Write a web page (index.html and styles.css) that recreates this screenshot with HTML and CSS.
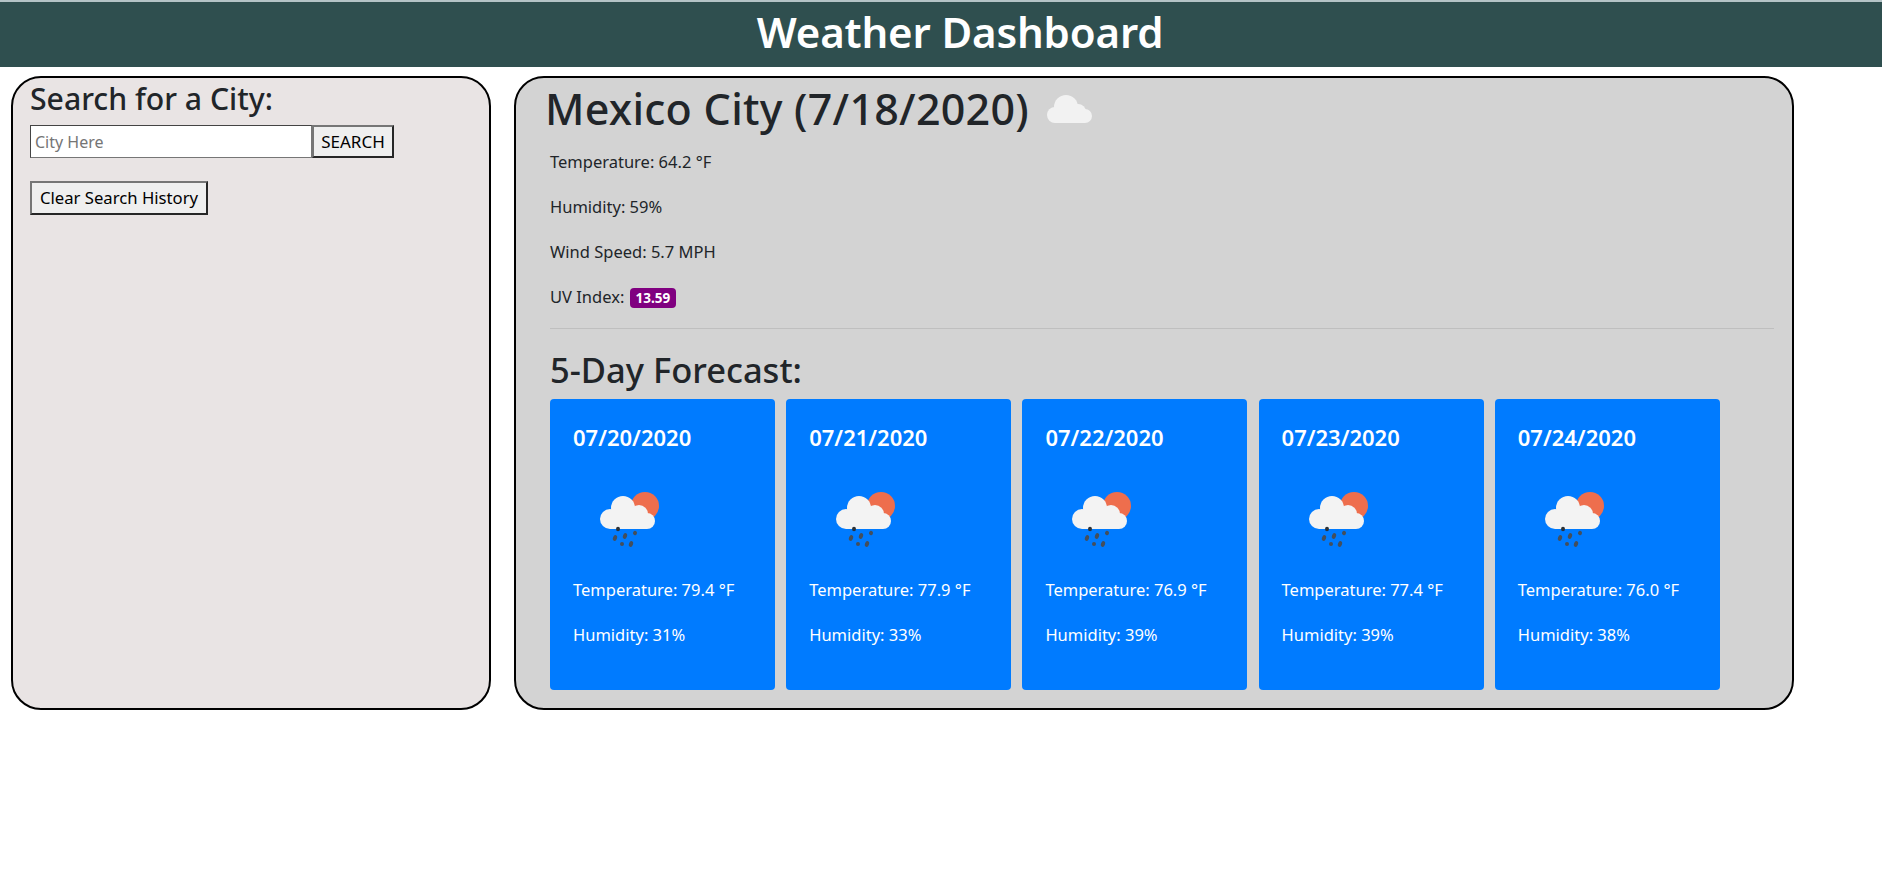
FILE: index.html
```html
<!DOCTYPE html>
<html lang="en">
<head>
  <meta charset="UTF-8">
  <title>Weather Dashboard</title>
  <link rel="stylesheet" href="styles.css">
</head>
<body>

  <svg class="icon-defs" width="0" height="0">
    <symbol id="rain-icon" viewBox="0 0 100 100">
      <circle cx="66" cy="37" r="14" fill="#ee6e4d"/>
      <g fill="#f3f3f3">
        <circle cx="31" cy="50" r="10"/>
        <circle cx="44" cy="39" r="12"/>
        <circle cx="60" cy="45" r="9"/>
        <circle cx="68" cy="52" r="8"/>
        <rect x="31" y="44" width="37" height="16"/>
      </g>
      <g fill="#444f5c">
        <ellipse cx="39" cy="60" rx="2" ry="2.200" fill="#2c3238"/>
        <ellipse cx="36" cy="69" rx="2" ry="3" transform="rotate(20 36 69)"/>
        <ellipse cx="46" cy="67" rx="2" ry="3" transform="rotate(20 46 67)"/>
        <ellipse cx="56" cy="64" rx="2" ry="2.200" transform="rotate(20 56 64)"/>
        <ellipse cx="43" cy="75" rx="2" ry="2"/>
        <ellipse cx="52" cy="75" rx="2" ry="3" transform="rotate(20 52 75)"/>
      </g>
    </symbol>
  </svg>

  <header class="top-bar">
    <h1>Weather Dashboard</h1>
  </header>

  <main class="dashboard">
    <section class="search-panel">
      <h3>Search for a City:</h3>
      <div class="search-row">
        <input type="text" class="city-input" placeholder="City Here">
        <button class="btn search-btn">SEARCH</button>
      </div>
      <button class="btn clear-btn">Clear Search History</button>
    </section>

    <section class="weather-panel">
      <div class="city-title">
        <h1>Mexico City (7/18/2020)</h1>
        <svg class="cloud-icon" viewBox="0 0 46 28">
          <g fill="#f2f2f2">
            <circle cx="8" cy="20" r="8"/>
            <circle cx="19" cy="12" r="12"/>
            <circle cx="31" cy="17" r="8"/>
            <circle cx="38" cy="21" r="7"/>
            <rect x="8" y="14" width="30" height="14"/>
          </g>
        </svg>
      </div>
      <div class="current">
        <p>Temperature: 64.2 °F</p>
        <p>Humidity: 59%</p>
        <p>Wind Speed: 5.7 MPH</p>
        <p>UV Index: <span class="uv-badge">13.59</span></p>
      </div>
      <hr>
      <h2>5-Day Forecast:</h2>
      <div class="forecast">
        <div class="card">
          <h5>07/20/2020</h5>
          <svg class="rain-icon"><use href="#rain-icon"/></svg>
          <p>Temperature: 79.4 °F</p>
          <p>Humidity: 31%</p>
        </div>
        <div class="card">
          <h5>07/21/2020</h5>
          <svg class="rain-icon"><use href="#rain-icon"/></svg>
          <p>Temperature: 77.9 °F</p>
          <p>Humidity: 33%</p>
        </div>
        <div class="card">
          <h5>07/22/2020</h5>
          <svg class="rain-icon"><use href="#rain-icon"/></svg>
          <p>Temperature: 76.9 °F</p>
          <p>Humidity: 39%</p>
        </div>
        <div class="card">
          <h5>07/23/2020</h5>
          <svg class="rain-icon"><use href="#rain-icon"/></svg>
          <p>Temperature: 77.4 °F</p>
          <p>Humidity: 39%</p>
        </div>
        <div class="card">
          <h5>07/24/2020</h5>
          <svg class="rain-icon"><use href="#rain-icon"/></svg>
          <p>Temperature: 76.0 °F</p>
          <p>Humidity: 38%</p>
        </div>
      </div>
    </section>
  </main>

</body>
</html>
```

FILE: styles.css
```css
* {
  box-sizing: border-box;
}

body {
  font-family: "Noto Sans", "Open Sans", sans-serif;
  font-size: 16.5px;
  line-height: 24px;
  color: #212529;
  background: #fff;
  margin: 0;
  border-top: 2px solid #b4c3c6;
}

.icon-defs {
  display: block;
  height: 0;
}

h1, h2, h3, h5, p {
  margin: 0;
  font-weight: 400;
}

.top-bar {
  background: #2f4f4f;
  height: 65px;
  padding-left: 38px;
  text-align: center;
}

.top-bar h1 {
  color: #fff;
  font-size: 42px;
  line-height: 60px;
  font-weight: 600;
  letter-spacing: -0.15px;
}

.dashboard {
  display: flex;
  gap: 23px;
  margin: 9px 0 0 11px;
}

.search-panel {
  width: 480px;
  height: 634px;
  background: #e9e4e4;
  border: 2px solid #000;
  border-radius: 30px;
  padding: 4px 0 0 17px;
}

.search-panel h3 {
  font-size: 30.2px;
  line-height: 34px;
  font-weight: 500;
  margin-bottom: 9px;
}

.search-row {
  display: flex;
  height: 33px;
}

.city-input {
  width: 282px;
  border: 1px solid #767676;
  border-top-color: #444;
  border-left-color: #444;
  padding: 0 4px;
  font: 16px "Noto Sans", sans-serif;
  background: #fff;
}

.city-input::placeholder {
  color: #757575;
}

.btn {
  font: 17px "Noto Sans", sans-serif;
  color: #000;
  background: #efefef;
  border: 2px solid #262626;
  border-top-color: #767676;
  border-left-color: #767676;
  padding: 0;
}

.search-btn {
  width: 82px;
}

.clear-btn {
  display: block;
  margin-top: 23px;
  width: 178px;
  height: 34px;
  padding-bottom: 2px;
  font-size: 16.7px;
}

.weather-panel {
  width: 1280px;
  height: 634px;
  background: #d3d3d3;
  border: 2px solid #000;
  border-radius: 30px;
  padding: 7px 18px 0 34px;
}

.city-title {
  display: flex;
  align-items: center;
  height: 48px;
  margin: 0 0 17px -5px;
}

.city-title h1 {
  font-size: 43px;
  line-height: 48px;
  font-weight: 500;
  letter-spacing: 0.25px;
}

.cloud-icon {
  width: 46px;
  height: 28px;
  margin-left: 18px;
}

.current p {
  margin-bottom: 21px;
}

.current p:last-child {
  margin-bottom: 19px;
}

.uv-badge {
  display: inline-block;
  background: #800080;
  color: #fff;
  font-size: 13.5px;
  font-weight: 700;
  line-height: 12px;
  padding: 4px 6px;
  margin-left: 1px;
  border-radius: 4px;
}

hr {
  border: 0;
  border-top: 1px solid #bfbfbf;
  margin: 0 0 22px;
}

h2 {
  font-size: 34.5px;
  line-height: 38px;
  font-weight: 500;
  margin-bottom: 10px;
}

.forecast {
  display: flex;
  gap: 11.2px;
}

.card {
  width: 225px;
  height: 291px;
  background: #007bff;
  color: #fff;
  border-radius: 4px;
  padding: 26px 23px 21px;
}

.card h5 {
  font-size: 22px;
  line-height: 24px;
  font-weight: 600;
  margin-bottom: 20px;
}

.rain-icon {
  display: block;
  width: 100px;
  height: 100px;
  margin: 0 0 9px 6px;
}

.card p {
  margin-bottom: 21px;
}
```
